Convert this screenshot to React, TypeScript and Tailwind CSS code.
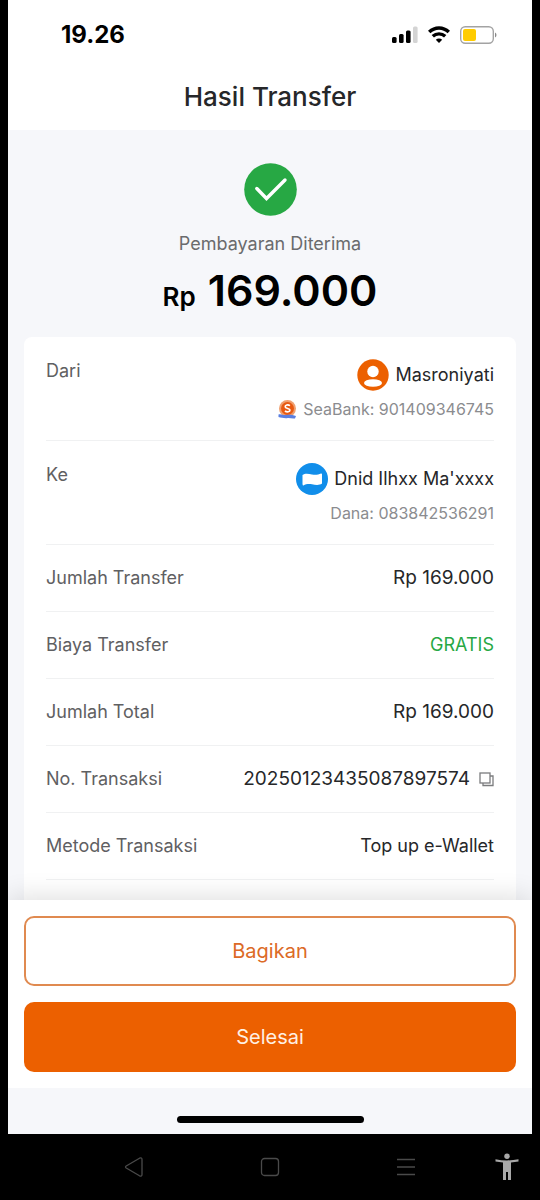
import React from "react";

function StatusBar() {
  return (
    <div className="flex h-[70px] items-center justify-between pl-[53px] pr-[35px]">
      <span className="text-2xl font-bold leading-7 text-black">19.26</span>
      <div className="flex items-center gap-[10px]">
        {/* Signal */}
        <svg width="26" height="18" viewBox="0 0 26 18" aria-hidden="true">
          <rect x="0" y="11" width="4.600" height="6" rx="1.500" fill="#000" />
          <rect x="7" y="8" width="4.600" height="9" rx="1.500" fill="#000" />
          <rect x="14" y="4.500" width="4.600" height="12.500" rx="1.500" fill="#000" />
          <rect x="21" y="0.500" width="4.600" height="16.500" rx="1.500" fill="#d4d4d4" />
        </svg>
        {/* Wifi */}
        <svg width="22" height="18" viewBox="0 0 22 18" aria-hidden="true">
          <path d="M1.200 6C6.800 0.600 15.200 0.600 20.800 6" fill="none" stroke="#000" strokeWidth="3.500" />
          <path d="M4.800 10.300C8.300 7 13.700 7 17.200 10.300" fill="none" stroke="#000" strokeWidth="3.400" />
          <path d="M7.800 13.700C9.600 12 12.400 12 14.200 13.700L11 17Z" fill="#000" />
        </svg>
        {/* Battery */}
        <svg width="37" height="18" viewBox="0 0 37 18" aria-hidden="true">
          <rect x="0.700" y="0.700" width="32.600" height="16.600" rx="4.500" fill="#fff" stroke="#a3a3a3" strokeWidth="1.400" />
          <rect x="3" y="3" width="13" height="12" rx="2" fill="#fc0" />
          <path d="M35 6.500C37 7.500 37 10.500 35 11.500Z" fill="#8a8a8a" />
        </svg>
      </div>
    </div>
  );
}

function UserAvatar() {
  return (
    <svg width="32" height="32" viewBox="0 0 32 32" aria-hidden="true">
      <circle cx="16" cy="16" r="15.700" fill="#ec6000" />
      <circle cx="16" cy="12.500" r="5.700" fill="#fff" />
      <ellipse cx="16" cy="24" rx="9" ry="3.800" fill="#fff" />
    </svg>
  );
}

function DanaLogo() {
  return (
    <svg width="32" height="32" viewBox="0 0 32 32" aria-hidden="true">
      <circle cx="16" cy="16" r="16" fill="#118eea" />
      <path d="M6.500 12C9 10.200 12.500 10.800 16 11.500C19.500 12.200 22.500 11.600 25 10.500Q26 10.200 26 11.500V20.500C23.500 22.500 19.500 22 16 21.300C12.500 20.800 9.500 21.300 7.500 22.500Q6.500 22.500 6.500 21Z" fill="#fff" />
    </svg>
  );
}

function SeaBankLogo() {
  return (
    <svg width="19" height="19" viewBox="0 0 19 19" aria-hidden="true">
      <circle cx="9.500" cy="8.500" r="8.500" fill="#f0a070" />
      <circle cx="9.500" cy="8.500" r="6.500" fill="#e85a12" />
      <path d="M12 5.600C9.800 4.300 7 5 7.200 6.900C7.400 8.900 12 8 12 10.100C12 12.100 9 12.400 6.900 11" fill="none" stroke="#fff" strokeWidth="1.600" />
      <path d="M0.500 14.500C3 13.500 5 15.500 8 15C11 14.500 14 14.500 18 16L17 18.500C14 19 12 17.800 9 18.200C6 18.500 3 17.500 0.500 17Z" fill="#5b7fe0" />
    </svg>
  );
}

type PartyProps = {
  label: string;
  icon: React.ReactNode;
  name: string;
  account: React.ReactNode;
};

function Party({ label, icon, name, account }: PartyProps) {
  return (
    <div className="flex h-[104px] justify-between border-b border-[#f0f1f2] pt-[22px]">
      <dt className="leading-6 text-[#5f6062]">{label}</dt>
      <dd className="flex flex-col items-end gap-[6px]">
        <span className="flex items-center gap-[6px] leading-8 text-[#262729]">
          {icon}
          {name}
        </span>
        <span className="flex items-center gap-[6px] text-base leading-6 text-[#8b8c8f]">{account}</span>
      </dd>
    </div>
  );
}

function Row({ label, children }: { label: string; children: React.ReactNode }) {
  return (
    <div className="flex h-[67px] items-center justify-between border-b border-[#f0f1f2]">
      <dt className="text-[#5f6062]">{label}</dt>
      <dd className="flex items-center gap-[9px] text-[#262729]">{children}</dd>
    </div>
  );
}

export default function App() {
  return (
    <div className="flex min-h-screen flex-col bg-black font-['Inter',sans-serif]">
      <div className="mx-2 flex flex-1 flex-col bg-[#f6f7fa]">
        <header className="h-[130px] bg-white">
          <StatusBar />
          <h1 className="text-center text-[26px] font-medium leading-[54px] text-[#262729]">Hasil Transfer</h1>
        </header>

        <main className="flex flex-1 flex-col px-4">
          {/* Payment result */}
          <div className="flex h-[207px] flex-col items-center pt-[33px]">
            <svg width="53" height="53" viewBox="0 0 53 53" aria-hidden="true">
              <circle cx="26.500" cy="26.500" r="26.300" fill="#27a844" />
              <path d="M12.800 25.500L22.500 35.500L41 17" fill="none" stroke="#fff" strokeWidth="3.400" strokeLinecap="round" />
            </svg>
            <p className="mt-4 text-lg leading-6 text-[#6a6b6d]">Pembayaran Diterima</p>
            <p className="mt-[10px] flex items-baseline gap-3 leading-[48px] text-black">
              <span className="text-[26px] font-semibold">Rp</span>
              <span className="text-[43px] font-semibold">169.000</span>
            </p>
          </div>

          <dl className="flex-1 rounded-t-lg bg-white px-[22px] text-lg leading-7">
            <Party label="Dari" icon={<UserAvatar />} name="Masroniyati" account={<><SeaBankLogo />SeaBank: 901409346745</>} />
            <Party label="Ke" icon={<DanaLogo />} name="Dnid Ilhxx Ma'xxxx" account="Dana: 083842536291" />
            <Row label="Jumlah Transfer">
              <span className="text-[19px]">Rp 169.000</span>
            </Row>
            <Row label="Biaya Transfer">
              <span className="text-lg text-[#27a844]">GRATIS</span>
            </Row>
            <Row label="Jumlah Total">
              <span className="text-[19px]">Rp 169.000</span>
            </Row>
            <Row label="No. Transaksi">
              <span className="text-[19px]">20250123435087897574</span>
              <button type="button" aria-label="Salin No. Transaksi">
                <svg width="15" height="15" viewBox="0 0 15 15" fill="none" stroke="#7b7c7e" strokeWidth="1.300" aria-hidden="true">
                  <rect x="1" y="1" width="10" height="10" />
                  <path d="M11 4H14V13.500H4V11" />
                </svg>
              </button>
            </Row>
            <Row label="Metode Transaksi">Top up e-Wallet</Row>
          </dl>
        </main>

        <footer className="flex flex-col gap-4 bg-white p-4 text-xl shadow-[0_-4px_24px_rgba(0,0,0,0.12)] [clip-path:inset(-30px_0_0_0)]">
          <button type="button" className="h-[70px] rounded-[10px] border-2 border-[#e08a50] text-[#dc6a26]">
            Bagikan
          </button>
          <button type="button" className="h-[70px] rounded-[10px] bg-[#ec6000] text-[#fff0e4]">
            Selesai
          </button>
        </footer>

        {/* Home indicator */}
        <div className="flex h-[46px] justify-center pt-7">
          <div className="h-[7px] w-[187px] rounded-full bg-black" />
        </div>
      </div>

      <nav className="flex h-[66px] items-center">
        <div className="w-[66px]" />
        <div className="grid flex-1 grid-cols-3 justify-items-center">
          <button type="button" aria-label="Kembali">
            <svg width="20" height="20" viewBox="0 0 20 20" fill="none" stroke="#4a4a4a" strokeWidth="1.300" strokeLinejoin="round" aria-hidden="true">
              <path d="M2.200 9L15.500 1.200Q18 0.200 18 2.500V17.500Q18 19.800 15.500 18.800L2.200 11Q0.800 10 2.200 9Z" />
            </svg>
          </button>
          <button type="button" aria-label="Beranda">
            <svg width="20" height="20" viewBox="0 0 20 20" fill="none" stroke="#4a4a4a" strokeWidth="1.300" aria-hidden="true">
              <rect x="1.500" y="1.500" width="17" height="17" rx="3" />
            </svg>
          </button>
          <button type="button" aria-label="Aplikasi terbaru">
            <svg width="20" height="20" viewBox="0 0 20 20" fill="none" stroke="#4a4a4a" strokeWidth="1.300" aria-hidden="true">
              <path d="M1 2.500H19M1 10H19M1 17.500H19" />
            </svg>
          </button>
        </div>
        <div className="flex w-[66px] justify-center">
          <button type="button" aria-label="Aksesibilitas">
            <svg width="24" height="28" viewBox="0 0 24 28" fill="#a8a8a8" aria-hidden="true">
              <circle cx="12" cy="3.200" r="2.700" />
              <path d="M0.500 6.200C8 7.800 16 7.800 23.500 6.200V8.600L16 9.600V27H13V19H11V27H8V9.600L0.500 8.600Z" />
            </svg>
          </button>
        </div>
      </nav>
    </div>
  );
}
